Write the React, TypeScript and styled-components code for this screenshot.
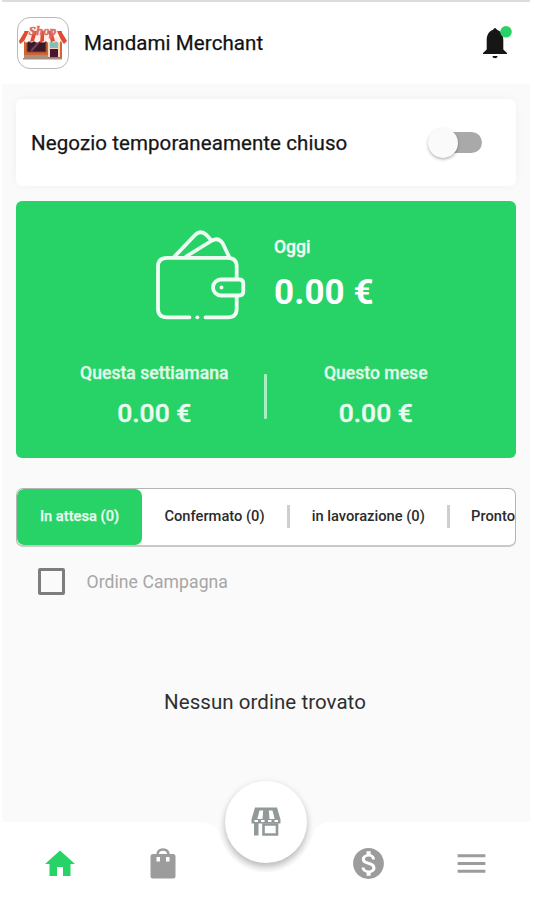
import React from "react";
import styled, { createGlobalStyle } from "styled-components";
import { MdHome, MdMonetizationOn, MdMenu } from "react-icons/md";

const GREEN = "#27d366";
const GREY = "#9c9c9c";

const GlobalStyle = createGlobalStyle`
  * { box-sizing: border-box; }
  body { margin: 0; background: #fff; font-family: Roboto, sans-serif; }
`;

const Screen = styled.div`
  width: 528px;
  height: 900px;
  margin-left: 2px;
  display: flex;
  flex-direction: column;
  overflow: hidden;
  border-top: 2px solid #dcdcdc;
`;

const Header = styled.header`
  height: 82px;
  flex: none;
  display: flex;
  align-items: center;
  padding: 0 18px 0 15px;
  background: #fff;
`;

const Logo = styled.div`
  width: 52px;
  height: 52px;
  border: 1.5px solid #b9b9b9;
  border-radius: 13px;
  background: #fff;
  display: flex;
  align-items: center;
  justify-content: center;
  svg { display: block; flex: none; }
`;

const Title = styled.h1`
  margin: 0 auto 0 15px;
  font-size: 20.5px;
  font-weight: 400;
  color: #111;
  letter-spacing: 0.09px;
  -webkit-text-stroke: 0.25px #111;
`;

const Content = styled.main`
  height: 738px;
  flex: none;
  padding: 15px 14px 0;
  background: #fafafa;
`;

const StatusCard = styled.section`
  height: 87px;
  display: flex;
  align-items: center;
  justify-content: space-between;
  padding: 0 34px 0 15px;
  background: #fff;
  border-radius: 6px;
  box-shadow: 0 0 9px rgba(0, 0, 0, 0.045);
`;

const StatusLabel = styled.span`
  font-size: 20.5px;
  color: #161616;
  letter-spacing: 0.09px;
  -webkit-text-stroke: 0.25px #161616;
`;

const Track = styled.div`
  width: 50px;
  height: 21px;
  border-radius: 11px;
  background: #a9a9a9;
  display: flex;
  align-items: center;
`;

const Thumb = styled.div`
  width: 30px;
  height: 30px;
  flex: none;
  margin-left: -4px;
  border-radius: 50%;
  background: #fafafa;
  box-shadow: 0 1.5px 3px rgba(0, 0, 0, 0.3);
`;

const Earnings = styled.section`
  height: 257px;
  margin-top: 15px;
  border-radius: 6px;
  background: ${GREEN};
  color: #fff;
`;

const Today = styled.div`
  height: 154px;
  padding: 24px 0 0 134px;
  display: flex;
`;

const TodayText = styled.div`
  padding: 11px 0 0 24px;
`;

const Caption = styled.div<{ $soft?: boolean }>`
  font-size: 17.6px;
  line-height: 22px;
  font-weight: 500;
  white-space: nowrap;
  color: ${(p) => (p.$soft ? "#e2f9ea" : "#f2fdf6")};
  -webkit-text-stroke: 0.3px currentColor;
`;

const Amount = styled.div<{ $big?: boolean }>`
  font-size: ${(p) => (p.$big ? 35 : 26.5)}px;
  line-height: ${(p) => (p.$big ? 42 : 32)}px;
  margin-top: ${(p) => (p.$big ? 14 : 13)}px;
  font-weight: ${(p) => (p.$big ? 700 : 500)};
  letter-spacing: ${(p) => (p.$big ? 0.1 : 0)}px;
  white-space: nowrap;
  color: ${(p) => (p.$big ? "#fff" : "#ecfbf1")};
  -webkit-text-stroke: ${(p) => (p.$big ? 0 : 0.4)}px currentColor;
`;

const Periods = styled.div`
  display: grid;
  grid-template-columns: 1fr 3px 1fr;
  padding: 7px 31px 0 29px;
`;

const Period = styled.div`
  text-align: center;
`;

const PeriodRule = styled.div`
  height: 45px;
  margin-top: 12px;
  border-radius: 1px;
  background: #a9edc2;
`;

const Tabs = styled.nav`
  height: 59px;
  margin-top: 29.5px;
  display: flex;
  align-items: center;
  overflow: hidden;
  border: 1.5px solid #b5b5b5;
  border-bottom: 2px solid #c9c9c9;
  border-radius: 7px;
  background: #fff;
`;

const Tab = styled.div<{ $active?: boolean; $w: number }>`
  width: ${(p) => p.$w}px;
  height: 56px;
  flex: none;
  display: flex;
  align-items: center;
  justify-content: center;
  padding-bottom: 2px;
  font-size: 14.7px;
  font-weight: 500;
  white-space: nowrap;
  color: ${(p) => (p.$active ? "#e9fbf0" : "#2b2b2b")};
  background: ${(p) => (p.$active ? GREEN : "transparent")};
  border-radius: 7px;
  -webkit-text-stroke: ${(p) => (p.$active ? 0.25 : 0)}px currentColor;
`;

const TabRule = styled.div`
  width: 3px;
  height: 23px;
  flex: none;
  background: #cfcfcf;
`;

const CampaignRow = styled.label`
  display: flex;
  align-items: center;
  height: 27px;
  margin: 21.5px 0 0 22px;
  color: #a6a6a6;
  font-size: 17.6px;
  letter-spacing: 0.06px;
`;

const Box = styled.span`
  width: 27px;
  height: 27px;
  margin-right: 21.5px;
  border: 3px solid #7d7d7d;
  border-radius: 2px;
`;

const Empty = styled.p`
  margin: 93px 0 0;
  padding-right: 2px;
  text-align: center;
  font-size: 20.5px;
  line-height: 28px;
  letter-spacing: 0.05px;
  color: #2f2f2f;
`;

const BottomBar = styled.footer`
  position: relative;
  flex: 1;
  display: grid;
  grid-template-columns: 116px 89px 116px 90px 116px;
  align-items: center;
  justify-items: center;
  padding-top: 5px;
  background: #fff;
`;

const Notch = styled.svg`
  position: absolute;
  left: 194px;
  top: -1px;
`;

const Fab = styled.button`
  position: absolute;
  left: 223px;
  top: -41px;
  width: 82px;
  height: 82px;
  padding: 0;
  border: 0;
  border-radius: 50%;
  background: #fff;
  display: flex;
  align-items: center;
  justify-content: center;
  box-shadow: 0 4px 6px rgba(0, 0, 0, 0.22), 0 1px 9px rgba(0, 0, 0, 0.07);
`;

const NavItem = styled.div<{ $active?: boolean }>`
  color: ${(p) => (p.$active ? GREEN : GREY)};
  display: flex;
`;

const ShopLogo = () => (
  <svg width="50" height="38" viewBox="0 0 50 38">
    <path d="M6 7h38v27H6z" fill="#d06432" />
    <path d="M9 17h19v11H9z" fill="#3a1827" stroke="#8a4938" />
    <path d="M13 27l8-9" stroke="#704457" strokeWidth="2" />
    <path d="M30 16h12v17H30z" fill="#f6d5bd" />
    <path d="M32 17h8v7h-8z" fill="#85bfb5" />
    <path d="M32 25h8v8h-8z" fill="#481630" />
    <path d="M6 31h24v3H6zM5 34h39v1.500H5z" fill="#a7907d" />
    <path d="M7 7h36l6 10-2 3q-3 0-4-3-2 3-5 0-2 3-5 0-3 3-5 0-3 3-6 0-3 3-6 0-3 3-5 0-2 3-5 0-1 3-4 3l-2-3z" fill="#fff0e8" />
    <path d="M7 7h4L6 17l-4 3-1-3zM15 7h4l-3 10-4 1zM23 7h3v10l-4 2zM30 7h4l3 10-4 1zM39 7h4l6 10-3 3-3-4z" fill="#df4b35" />
    <text x="24.500" y="11" textAnchor="middle" fontFamily="Liberation Serif, serif" fontStyle="italic" fontWeight="700" fontSize="13" fill="#dc6a60" stroke="#dc6a60" strokeWidth="0.5">Shop</text>
  </svg>
);

const Bell = () => (
  <svg width="32" height="36" viewBox="0 0 32 36">
    <path d="M13 4.800Q15 1.200 17 4.800c4 1.500 6.300 5.200 6.300 10.200v9.500L27 28v1H3v-1l3.700-3.500V15c0-5 2.300-8.700 6.300-10.200z" fill="#161616" />
    <path d="M12.300 31h5.400q-.4 2.200-2.700 2.200T12.300 31z" fill="#161616" />
    <circle cx="26" cy="6.800" r="5.800" fill={GREEN} />
  </svg>
);

const Wallet = () => (
  <svg width="100" height="100" viewBox="150 225 100 100" fill="none" stroke="#effcf3" strokeWidth="3.800" strokeLinecap="round" strokeLinejoin="round">
    <path d="M189.500 317.300H167Q158 317.300 158 308.500V266.500Q158 257.800 167 257.800H228Q236.700 257.800 236.700 266.500V278M236.700 297V308.500Q236.700 317.300 228 317.300H205.500" />
    <path d="M197.300 317.300h.1" />
    <path d="M221 279.500H239Q243.300 279.500 243.300 283.500V291.500Q243.300 295.500 239 295.500H221A8 8 0 0 1 221 279.500z" />
    <circle cx="221.500" cy="287.500" r="1" strokeWidth="2" />
    <path d="M174.500 256.500L194.500 235.500Q200.500 229.500 206.500 235L211 240" />
    <path d="M186 256.500L212 240.500Q218.500 237 222.500 243L229 256.500" />
  </svg>
);

const Bag = () => (
  <svg width="26" height="31" viewBox="0 0 26 31" fill="none">
    <path d="M3 6h20q2.500 0 2.500 2.500V28q0 2.500-2.500 2.500H3Q.5 30.500.5 28V8.500Q.5 6 3 6z" fill={GREY} />
    <path d="M7.500 7C7.500 3.500 9.500 1.500 13 1.500S18.500 3.500 18.500 7" stroke={GREY} strokeWidth="2.600" />
    <path d="M6.500 9h3.500v4.500H6.500zM16 9h3.500v4.500H16z" fill="#fff" />
  </svg>
);

const Store = () => (
  <svg width="30" height="30" viewBox="0 0 30 30" fill="none">
    <path d="M4 .5h22l3.500 12v4H.5v-4z" fill="#929a99" />
    <path d="M8.500 3.500h3.700l-.7 8.500H6.300zM17.800 3.500h3.700l2.200 8.500h-5.200z" fill="#fff" />
    <path d="M3.500 14h3.500M10 14h3.500M17 14h3.500M23.500 14H27" stroke="#fff" strokeWidth="2" />
    <path d="M3 15h4.500v13.500H3z" fill="#929a99" />
    <path d="M12.500 17.500h13.500v10H12.500z" fill="#fff" stroke="#929a99" strokeWidth="2.600" />
  </svg>
);

export default function App() {
  return (
    <>
      <GlobalStyle />
      <Screen>
        <Header>
          <Logo><ShopLogo /></Logo>
          <Title>Mandami Merchant</Title>
          <Bell />
        </Header>
        <Content>
          <StatusCard>
            <StatusLabel>Negozio temporaneamente chiuso</StatusLabel>
            <Track role="switch" aria-checked={false}><Thumb /></Track>
          </StatusCard>
          <Earnings>
            <Today>
              <Wallet />
              <TodayText>
                <Caption>Oggi</Caption>
                <Amount $big>0.00 €</Amount>
              </TodayText>
            </Today>
            <Periods>
              <Period>
                <Caption $soft>Questa settiamana</Caption>
                <Amount>0.00 €</Amount>
              </Period>
              <PeriodRule />
              <Period>
                <Caption $soft>Questo mese</Caption>
                <Amount>0.00 €</Amount>
              </Period>
            </Periods>
          </Earnings>
          <Tabs>
            <Tab $w={125} $active>In attesa (0)</Tab>
            <Tab $w={145}>Confermato (0)</Tab>
            <TabRule />
            <Tab $w={156.5}>in lavorazione (0)</Tab>
            <TabRule />
            <Tab $w={87}>Pronto</Tab>
          </Tabs>
          <CampaignRow><Box />Ordine Campagna</CampaignRow>
          <Empty>Nessun ordine trovato</Empty>
        </Content>
        <BottomBar>
          <Notch width="140" height="54" viewBox="0 0 140 54">
            <path d="M0 0V1Q18 1 22 10C29 34 46 51 70 51S111 34 118 10Q122 1 140 1V0z" fill="#fafafa" />
          </Notch>
          <NavItem $active><MdHome size={36} /></NavItem>
          <NavItem><Bag /></NavItem>
          <span />
          <NavItem><MdMonetizationOn size={37} /></NavItem>
          <NavItem><MdMenu size={37} /></NavItem>
          <Fab aria-label="Negozio"><Store /></Fab>
        </BottomBar>
      </Screen>
    </>
  );
}
